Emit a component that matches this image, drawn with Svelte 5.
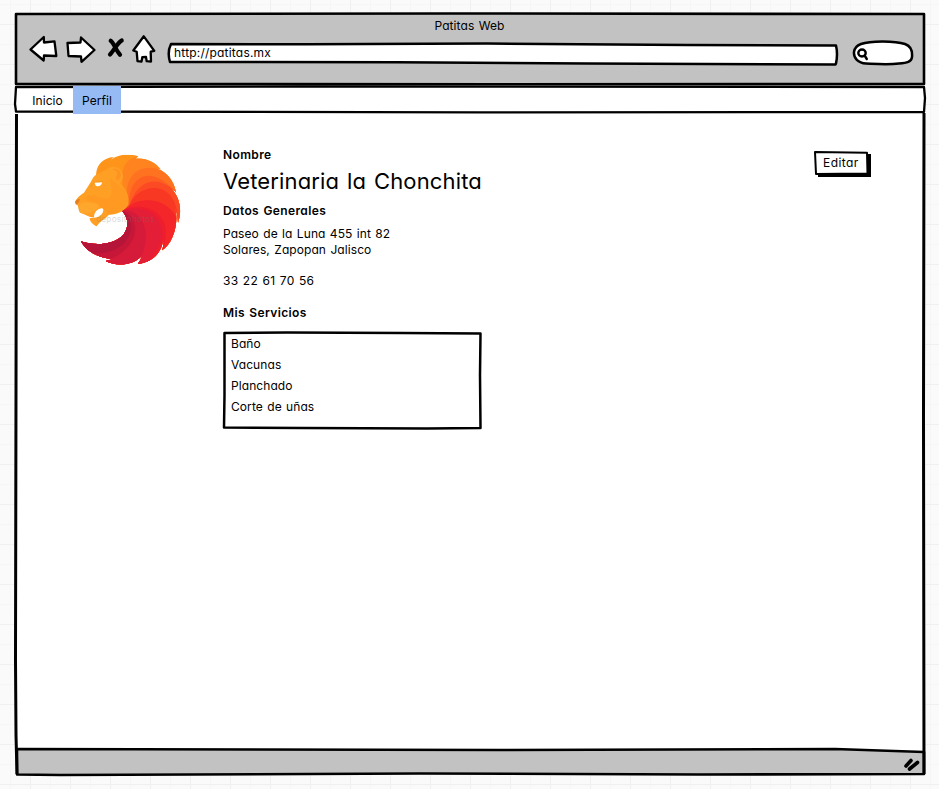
<script>
  const tabs = [
    { name: 'Inicio', active: false },
    { name: 'Perfil', active: true }
  ];
  const services = ['Baño', 'Vacunas', 'Planchado', 'Corte de uñas'];
</script>

<div class="desk">
  <div class="window">
    <svg class="frame" width="939" height="789" viewBox="0 0 939 789" fill="none" stroke="#000" stroke-width="3" stroke-linejoin="round">
      <path fill="#fff" stroke="none" d="M16 14H924V775H16Z" />
      <path fill="#c2c2c2" stroke-width="2.600" d="M16 14L450 13.5L924 14V84L500 84.3L16 84Z" />
      <path fill="#fff" stroke-width="2.300" d="M16 87L300 86.5L924 87L925 98L924 112L480 112.300L16 111.500L15 104Z" />
      <path fill="#c2c2c2" stroke-width="2.600" d="M17 749L500 750L835 749L924 752V774L700 774.5L420 773.5L60 775L17 774.5Z" />
      <path d="M16.500 114L16 390L15.500 660L16 735L17 774M924 113L923.500 420L924 774" />
    </svg>

    <header>
      <div class="title">Patitas Web</div>
      <div class="toolbar">
        <svg class="controls" width="132" height="34" viewBox="0 0 132 34" fill="#fff" stroke="#000" stroke-width="2.3" stroke-linejoin="round" stroke-linecap="round">
          <path d="M2.500 16.500L15.800 4L16 9.500L26.500 8.300L28.300 23L16 22.500L15.700 27.500Z" />
          <path d="M39.500 10L52.500 9.500L53 4.500L66.500 17L53.500 28.800L53 23.500L40.500 23Z" />
          <path fill="none" stroke-width="4.200" d="M82.700 7.800C86 10 87.500 17 92 21.700M93.700 7.500C90 9 86.500 17 82 21.500" />
          <path d="M105.300 17.500L115.800 3.300L126.300 17.800L122.700 18.600L123 28.600L118.700 28.200L118 24L114.300 24.200L113.500 28.600L109.500 28.200L108.700 18.800Z" />
        </svg>
        <div class="address">
          <svg width="672" height="24" viewBox="0 0 672 24" fill="#fff" stroke="#000" stroke-width="2.5" stroke-linejoin="round">
            <path d="M4 2L140 2.300L320 1.500L520 3L669 3.500Q671 12 669 21.500L668.500 22.500L420 21.500L230 20.300L3 20Q0 10 4 2Z" />
          </svg>
          <span class="url">http://patitas.mx</span>
        </div>
        <svg class="search" width="62" height="28" viewBox="0 0 62 28" fill="#fff" stroke="#000" stroke-width="2.5">
          <path d="M9 5C18 1.500 43 1.500 53 5C59 7 60.500 12 60 18C59.500 23 55 24 47 24.500C36 26 24 25 14 24.500C6 24 1.500 19 2 13C2.500 8.500 5 6.500 9 5Z" />
          <ellipse cx="10" cy="14" rx="3.700" ry="3.500" stroke-width="2.400" />
          <path d="M12.600 16.500L14.800 20" stroke-linecap="round" stroke-width="2.400" />
        </svg>
      </div>
    </header>

    <nav>
      {#each tabs as tab}
        <span class="tab" class:active={tab.active}>{tab.name}</span>
      {/each}
    </nav>

    <main>
      <svg class="logo" width="140" height="140" viewBox="0 0 420 420">
        <clipPath id="mane">
          <path d="M108 104C110 72 130 54 161 51L150 62C169 45 202 40 235 49L226 56C258 53 285 66 302 88L278 83C315 88 342 120 348 156L329 141C354 162 370 205 354 248C353 228 350 212 345 203C358 250 338 312 306 331C311 318 312 304 308 293C312 328 282 367 233 372C241 362 244 354 246 347C218 376 170 381 137 363L160 357C118 354 80 337 63 304C110 320 165 312 190 284C208 262 205 232 186 212L120 130Z" />
        </clipPath>
        <g clip-path="url(#mane)">
          <path fill="#ff941a" d="M0 0H420V420H0Z" />
          <path fill="#ff8420" d="M200 190C180 120 175 60 235 49L420 0V420H0V300L186 212Z" />
          <path fill="#ff7220" d="M203 193C190 125 220 65 302 88L420 60V420H0V300L186 212Z" />
          <path fill="#ff6022" d="M206 196C205 115 265 65 348 156L420 150V420H0V300L186 212Z" />
          <path fill="#fc4a24" d="M208 200C225 130 285 95 348 156L420 150V420H0V300L186 212Z" />
          <path fill="#f93824" d="M206 202C225 130 355 105 354 248H420V420H0V300L186 212Z" />
          <path fill="#f4262a" d="M202 202C245 165 335 175 354 248H420V420H0V300L186 212Z" />
          <path fill="#ee1e2f" d="M194 208C265 180 350 230 306 331L420 420H0V300L186 212Z" />
          <path fill="#e31e36" d="M192 210C250 195 315 220 306 300L233 420H0V300L186 212Z" />
          <path fill="#d61a39" d="M190 211C245 210 285 275 233 372V420H0V300L186 212Z" />
          <path fill="#c71738" d="M189 212C240 225 250 325 137 363V420H0V300L186 212Z" />
          <path fill="#b51538" d="M188 212C235 240 220 350 90 340L0 420V300L186 212Z" />
        </g>
        <path fill="#ffa024" d="M46 190C42 182 60 164 72 158C80 145 88 134 96 119C104 99 128 99 146 84C165 73 187 87 189 107C190 117 184 125 179 130C201 148 208 171 205 191C198 210 174 224 147 224C135 237 119 244 110 259C99 255 88 243 89 235C99 231 115 236 126 221C133 211 130 205 124 205C112 208 103 215 102 232C88 233 74 222 60 218C53 208 58 197 46 190Z" />
        <path fill="#ff941f" opacity=".6" d="M80 169C103 158 120 180 146 173C165 162 149 134 151 113C168 134 195 139 204 169C212 194 178 221 147 224L129 205C107 200 115 181 80 184Z" />
        <path fill="#ffab34" opacity=".6" d="M60 194C75 180 81 191 110 190C120 194 119 205 103 211C85 224 65 220 60 216Z" />
        <path fill="#ff9222" d="M156 87C178 81 190 101 178 118C170 125 164 119 171 106C174 96 166 90 156 87Z" />
        <path fill="#e58020" d="M46 188C44 181 52 177 60 176L57 187L48 195Z" />
        <path fill="#fff" d="M104 126C111 130 119 126 126 127C126 136 116 141 109 138C105 135 104 130 104 126Z" />
        <path fill="none" stroke="#ee921c" stroke-width="2" d="M92 142C101 119 118 128 129 123" />
        <text x="108" y="246" textLength="176" fill="#777" opacity=".27" font-family="Inter, sans-serif" font-size="25">depositphotos</text>
      </svg>

      <section class="profile">
        <h2 class="l-name">Nombre</h2>
        <h1>Veterinaria la Chonchita</h1>
        <h2 class="l-data">Datos Generales</h2>
        <p class="street">Paseo de la Luna 455 int 82</p>
        <p class="city">Solares, Zapopan Jalisco</p>
        <p class="phone">33 22 61 70 56</p>
        <h2 class="l-services">Mis Servicios</h2>
        <div class="services">
          <svg class="outline" width="260" height="100" viewBox="0 0 260 100" fill="none" stroke="#000" stroke-width="2.5" stroke-linejoin="round">
            <path d="M2.500 3L65 2.500L180 3L258.500 3.500L258 45L258.500 98L205 98.500L80 98L2 97.500L2.500 65Z" />
          </svg>
          <ul>
            {#each services as service}
              <li>{service}</li>
            {/each}
          </ul>
        </div>
      </section>

      <button>
        <svg class="outline" width="60" height="30" viewBox="0 0 60 30" stroke="#000" stroke-width="2" stroke-linejoin="round">
          <path fill="#000" stroke="none" d="M5 4H58V27H5Z" />
          <path fill="#fff" d="M2 2L54 2.800L54.500 23.500L3 24Z" />
        </svg>
        <span>Editar</span>
      </button>
    </main>

    <footer>
      <svg width="18" height="16" viewBox="0 0 18 16" stroke="#000" stroke-width="3.600" stroke-linecap="round">
        <path d="M3 10L8 4.500M6.500 13L14.500 6.500" />
      </svg>
    </footer>
  </div>
</div>

<style>
  :global(body) { overflow: hidden; }
  .desk {
    width: 939px;
    height: 789px;
    box-sizing: border-box;
    background-color: #fafafa;
    background-image:
      linear-gradient(90deg, #f0f0f0 1px, transparent 1px),
      linear-gradient(#f0f0f0 1px, transparent 1px),
      linear-gradient(90deg, #f6f6f6 1px, transparent 1px),
      linear-gradient(#f6f6f6 1px, transparent 1px);
    background-size: 40px 40px, 40px 40px, 20px 20px, 20px 20px;
    background-position: 30px 0, 0 24px, 10px 0, 0 4px;
    color: #000;
    font: 12px/16px Inter, "Open Sans", sans-serif;
    font-feature-settings: "cv11" 1, "calt" 0;
    letter-spacing: .08px;
    word-spacing: .9px;
    white-space: nowrap;
  }
  .window {
    position: relative;
    display: flex;
    flex-direction: column;
    height: 789px;
    isolation: isolate;
  }
  .frame { position: absolute; inset: 0; z-index: -1; }
  svg { display: block; }
  header { height: 86px; box-sizing: border-box; padding: 18px 0 0; }
  .title { text-align: center; height: 15px; }
  .toolbar { display: flex; align-items: flex-start; padding-left: 28px; }
  .controls { margin-right: 7px; }
  .address { position: relative; margin-top: 9px; }
  .url { position: absolute; left: 7px; top: 3px; letter-spacing: .2px; }
  .search { margin: 6px 0 0 13px; }
  nav { display: flex; height: 28px; padding-left: 22px; }
  .tab { box-sizing: border-box; width: 51px; padding-top: 6px; line-height: 17px; text-align: center; }
  .tab.active { width: 48px; background: #96baf4; }
  main { display: flex; align-items: flex-start; height: 636px; }
  .logo { margin: 26px 0 0 60px; }
  .profile { width: 260px; margin: 33px 0 0 23px; }
  h1, h2, p, ul { margin: 0; padding: 0; }
  h2 { font-size: 12px; line-height: 16px; font-weight: 600; letter-spacing: .38px; }
  h1 { font-size: 22px; line-height: 32px; font-weight: 400; margin-top: 2px; letter-spacing: .15px; word-spacing: 1.5px; }
  .l-data { margin-top: 6px; }
  .street { margin-top: 7px; }
  .phone { margin-top: 15px; letter-spacing: .25px; }
  .l-services { margin-top: 16px; }
  .services { position: relative; height: 100px; margin-top: 9px; padding-left: 8px; box-sizing: border-box; }
  .services .outline { position: absolute; left: -1px; top: 0; }
  ul { list-style: none; padding-top: 4px; }
  li { height: 21px; line-height: 20px; }
  button {
    position: relative;
    width: 60px;
    height: 30px;
    margin: 36px 0 0 330px;
    padding: 0;
    border: 0;
    background: none;
    color: #000;
    font: inherit;
    font-feature-settings: inherit;
    letter-spacing: .45px;
  }
  button .outline { position: absolute; left: 0; top: 0; }
  button span { position: absolute; left: 10px; top: 5px; }
  footer { display: flex; justify-content: flex-end; padding: 6px 18px 0 0; }
</style>
